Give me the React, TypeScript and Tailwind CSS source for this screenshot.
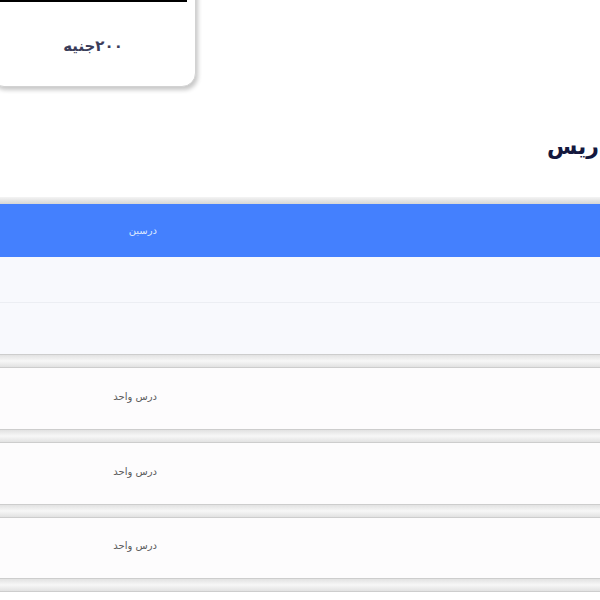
import React from "react";

const Band = () => (
  <div className="h-[14px] border-y border-[#cdcdcd] bg-gradient-to-b from-[#e2e2e2] via-[#f7f7f7] to-[#e2e2e2]" />
);

const LessonRow = ({ h }: { h: string }) => (
  <div className={`${h} bg-[#fdfcfd] flex items-center pb-[5px]`}>
    <div className="w-[157px] text-right text-[10px] text-[#5a5a5a]" dir="rtl">
      درس واحد
    </div>
  </div>
);

export default function App() {
  return (
    <div
      className="w-[600px] h-[600px] overflow-hidden bg-white flex flex-col"
      style={{ fontFamily: '"DejaVu Sans", "Noto Sans", sans-serif' }}
    >
      <div className="-mt-[100px] -ml-[10px] w-[206px] h-[187px] shrink-0 rounded-[14px] border border-[#d2d2d2] shadow-[2px_3px_4px_rgba(0,0,0,0.22)] px-2 pt-2 flex flex-col bg-white">
        <div className="h-[93px] bg-black shrink-0" />
        <div
          className="flex-1 flex items-center justify-center pt-[5px] text-[15px] font-bold text-[#3b3d5a]"
          dir="rtl"
        >
          ٢٠٠جنيه
        </div>
      </div>

      <div className="mt-[44px] h-[32px] flex justify-end pr-[1px] whitespace-nowrap text-[22px] leading-[32px] font-bold text-[#14183e] shrink-0">
        <span dir="rtl">ريس</span>
      </div>

      <div className="mt-[34px] flex flex-col shrink-0">
        <div className="h-[7px] bg-gradient-to-b from-[#f4f4f4] to-[#d6d6d6]" />
        <div className="h-[53px] bg-[#4480fe] flex items-center">
          <div className="w-[157px] text-right text-[10px] text-[#dce8ff]" dir="rtl">
            درسين
          </div>
        </div>
        <div className="h-[46px] bg-[#f8f9fd] border-b border-[#eceef3]" />
        <div className="h-[51px] bg-[#f8f9fd]" />
        <Band />
        <LessonRow h="h-[61px]" />
        <Band />
        <LessonRow h="h-[61px]" />
        <Band />
        <LessonRow h="h-[60px]" />
        <Band />
      </div>
    </div>
  );
}
